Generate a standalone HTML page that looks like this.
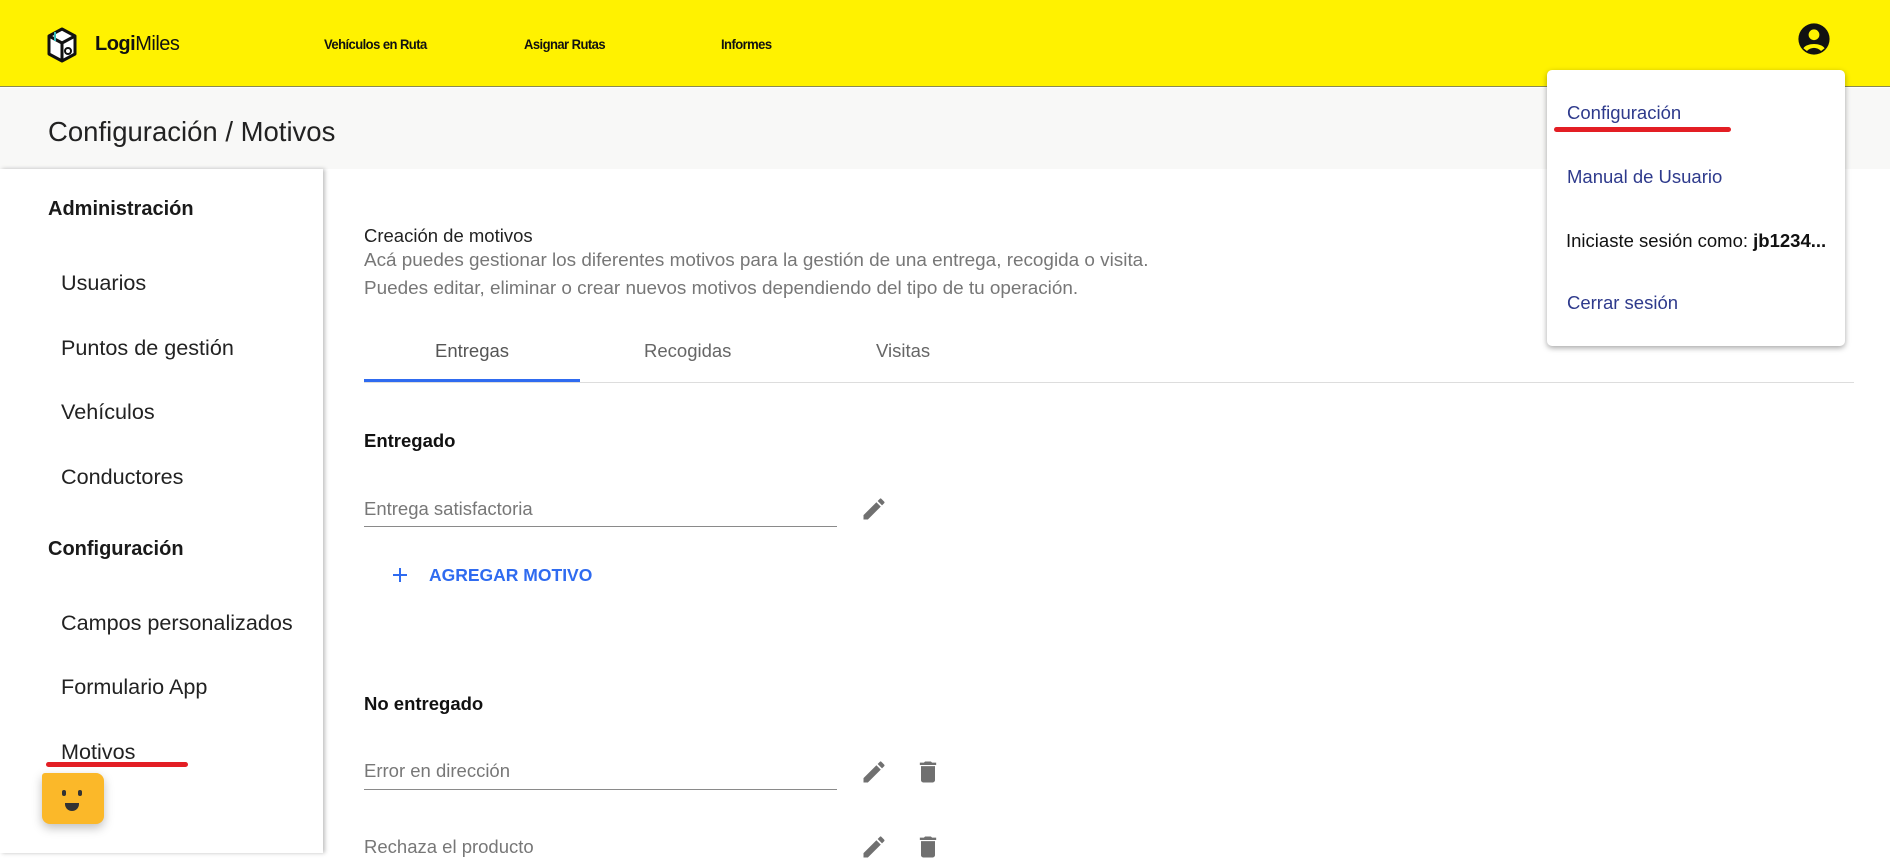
<!DOCTYPE html>
<html><head><meta charset="utf-8"><style>
*{margin:0;padding:0;box-sizing:border-box}
body{width:1890px;height:853px;overflow:hidden;background:#fff;font-family:"Liberation Sans",Arial,sans-serif;position:relative;color:#212121}
.abs{position:absolute;white-space:nowrap}
.hdr{position:absolute;left:0;top:0;width:1890px;height:87px;background:#fff200;border-bottom:1px solid #8a8a55}
.nav{font-size:14px;font-weight:bold;color:#111;letter-spacing:-0.6px;top:36px;transform:scaleX(0.93);transform-origin:left}
.crumb{position:absolute;left:0;top:88px;width:1890px;height:81px;background:#f8f8f7}
.side{position:absolute;left:0;top:169px;width:323px;height:684px;background:#fff;box-shadow:2px 0 4px rgba(0,0,0,.25)}
.sh{font-size:20px;font-weight:bold;color:#1a1a1a;left:48px}
.si{font-size:21.6px;color:#222;left:61px}
.gray{color:#777;font-size:18.9px}
.inp{font-size:18.5px;color:#777}
.ul{position:absolute;height:1px;background:#8a8a8a}
.menu{position:absolute;left:1547px;top:70px;width:298px;height:276px;background:#fff;border-radius:5px;box-shadow:0 2px 6px rgba(0,0,0,.35)}
.mi{font-size:18.5px;color:#2e3a8c;left:1567px}
</style></head><body>
<div class="hdr"></div>
<svg class="abs" style="left:46px;top:27px" width="32" height="36" viewBox="0 0 32 36"><path d="M16 2 L29 9 L29 27 L16 34 L3 27 L3 9 Z" fill="#fff" stroke="#111" stroke-width="3" stroke-linejoin="round"/><path d="M3 9 L16 16 L29 9 M16 16 L16 34" stroke="#111" stroke-width="3" fill="none"/><path d="M9 5 L9 14" stroke="#3bb" stroke-width="2"/><circle cx="22" cy="24" r="3" fill="none" stroke="#111" stroke-width="2"/></svg>
<div class="abs" style="left:95px;top:33px;font-size:20px;color:#111;letter-spacing:-0.5px"><b>Logi</b>Miles</div>
<div class="abs nav" style="left:324px">Vehículos en Ruta</div>
<div class="abs nav" style="left:524px">Asignar Rutas</div>
<div class="abs nav" style="left:721px">Informes</div>
<svg class="abs" style="left:1797px;top:22px" width="34" height="34" viewBox="0 0 24 24"><circle cx="12" cy="12" r="11" fill="#111"/><circle cx="12" cy="9" r="3.8" fill="#fff200"/><path d="M4.5 18.5 C7 14.5 17 14.5 19.5 18.5 L17 20.5 C14 17.5 10 17.5 7 20.5 Z" fill="#fff200"/></svg>
<div class="crumb"></div>
<div class="abs" style="left:48px;top:116px;font-size:27.5px;color:#222">Configuración / Motivos</div>
<div class="side"></div>
<div class="abs sh" style="top:198px">Administración</div>
<div class="abs si" style="top:270px">Usuarios</div>
<div class="abs si" style="top:335px">Puntos de gestión</div>
<div class="abs si" style="top:399px">Vehículos</div>
<div class="abs si" style="top:464px">Conductores</div>
<div class="abs sh" style="top:538px">Configuración</div>
<div class="abs si" style="top:610px">Campos personalizados</div>
<div class="abs si" style="top:674px">Formulario App</div>
<div class="abs si" style="top:739px">Motivos</div>
<div class="abs" style="left:46px;top:762px;width:142px;height:5px;background:#e31e24;border-radius:3px"></div>
<div class="abs" style="left:42px;top:773px;width:62px;height:51px;background:#fbb829;border-radius:3px 8px 8px 8px;box-shadow:0 4px 10px rgba(0,0,0,.25)"></div>
<div class="abs" style="left:62px;top:790px;width:4px;height:6px;background:#333;border-radius:2px"></div>
<div class="abs" style="left:78px;top:790px;width:4px;height:6px;background:#333;border-radius:2px"></div>
<div class="abs" style="left:65px;top:803px;width:14px;height:8px;background:#333;border-radius:0 0 7px 7px"></div>
<div class="abs" style="left:364px;top:225px;font-size:18.5px;color:#222">Creación de motivos</div>
<div class="abs gray" style="left:364px;top:250px">Acá puedes gestionar los diferentes motivos para la gestión de una entrega, recogida o visita.</div>
<div class="abs gray" style="left:364px;top:278px">Puedes editar, eliminar o crear nuevos motivos dependiendo del tipo de tu operación.</div>
<div class="abs" style="left:435px;top:340px;font-size:18.5px;color:#555">Entregas</div>
<div class="abs" style="left:644px;top:340px;font-size:18.5px;color:#666">Recogidas</div>
<div class="abs" style="left:876px;top:340px;font-size:18.5px;color:#666">Visitas</div>
<div class="ul" style="left:364px;top:382px;width:1490px;background:#ddd"></div>
<div class="abs" style="left:364px;top:379px;width:216px;height:3px;background:#2f6bf0"></div>
<div class="abs" style="left:364px;top:430px;font-size:18.5px;font-weight:bold;color:#111">Entregado</div>
<div class="abs inp" style="left:364px;top:498px">Entrega satisfactoria</div>
<div class="ul" style="left:364px;top:526px;width:473px"></div>
<svg class="abs" style="left:860px;top:495px" width="28" height="28" viewBox="0 0 24 24"><path d="M3 17.25V21h3.75L17.81 9.94l-3.75-3.75L3 17.25zM20.71 7.04a1 1 0 000-1.41l-2.34-2.34a1 1 0 00-1.41 0l-1.83 1.83 3.75 3.75 1.83-1.83z" fill="#707070"/></svg>
<svg class="abs" style="left:388px;top:563px" width="24" height="24" viewBox="0 0 24 24"><path d="M19 13h-6v6h-2v-6H5v-2h6V5h2v6h6v2z" fill="#2f6bf0"/></svg>
<div class="abs" style="left:429px;top:565px;font-size:17.5px;font-weight:bold;color:#2f6bf0">AGREGAR MOTIVO</div>
<div class="abs" style="left:364px;top:693px;font-size:18.5px;font-weight:bold;color:#111">No entregado</div>
<div class="abs inp" style="left:364px;top:760px">Error en dirección</div>
<div class="ul" style="left:364px;top:789px;width:473px"></div>
<svg class="abs" style="left:860px;top:758px" width="28" height="28" viewBox="0 0 24 24"><path d="M3 17.25V21h3.75L17.81 9.94l-3.75-3.75L3 17.25zM20.71 7.04a1 1 0 000-1.41l-2.34-2.34a1 1 0 00-1.41 0l-1.83 1.83 3.75 3.75 1.83-1.83z" fill="#707070"/></svg>
<svg class="abs" style="left:914px;top:758px" width="28" height="28" viewBox="0 0 24 24"><path d="M6 19c0 1.1.9 2 2 2h8c1.1 0 2-.9 2-2V7H6v12zM19 4h-3.5l-1-1h-5l-1 1H5v2h14V4z" fill="#707070"/></svg>
<div class="abs inp" style="left:364px;top:836px">Rechaza el producto</div>
<svg class="abs" style="left:860px;top:833px" width="28" height="28" viewBox="0 0 24 24"><path d="M3 17.25V21h3.75L17.81 9.94l-3.75-3.75L3 17.25zM20.71 7.04a1 1 0 000-1.41l-2.34-2.34a1 1 0 00-1.41 0l-1.83 1.83 3.75 3.75 1.83-1.83z" fill="#707070"/></svg>
<svg class="abs" style="left:914px;top:833px" width="28" height="28" viewBox="0 0 24 24"><path d="M6 19c0 1.1.9 2 2 2h8c1.1 0 2-.9 2-2V7H6v12zM19 4h-3.5l-1-1h-5l-1 1H5v2h14V4z" fill="#707070"/></svg>
<div class="menu"></div>
<div class="abs mi" style="top:102px">Configuración</div>
<div class="abs" style="left:1554px;top:127px;width:177px;height:5px;background:#e31e24;border-radius:3px"></div>
<div class="abs mi" style="top:166px">Manual de Usuario</div>
<div class="abs" style="left:1566px;top:230px;font-size:18.5px;color:#111">Iniciaste sesión como: <b>jb1234...</b></div>
<div class="abs mi" style="top:292px">Cerrar sesión</div>
</body></html>
